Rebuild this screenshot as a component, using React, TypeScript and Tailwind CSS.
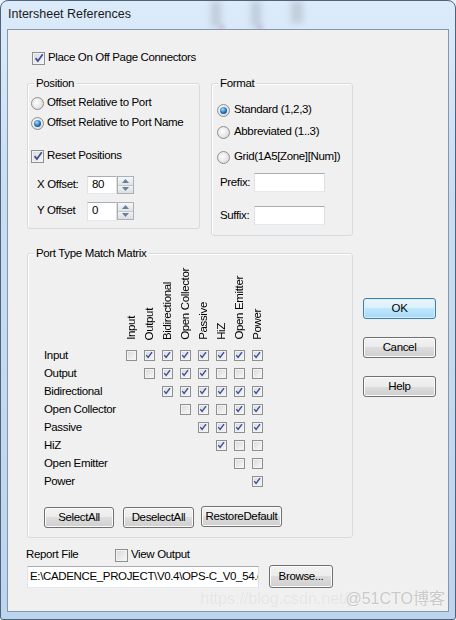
import React from 'react';

const FONT = "[font-family:'Liberation_Sans',Arial,sans-serif]";

const columns = ['Input', 'Output', 'Bidirectional', 'Open Collector', 'Passive', 'HiZ', 'Open Emitter', 'Power'];

// 1 = checked, 0 = unchecked, null = no box (lower triangle)
const matrix: (number | null)[][] = [
  [0, 1, 1, 1, 1, 1, 1, 1],
  [null, 0, 1, 1, 1, 0, 0, 0],
  [null, null, 1, 1, 1, 1, 1, 1],
  [null, null, null, 0, 1, 0, 1, 1],
  [null, null, null, null, 1, 1, 1, 1],
  [null, null, null, null, null, 1, 0, 0],
  [null, null, null, null, null, null, 0, 0],
  [null, null, null, null, null, null, null, 1],
];

function CheckBox({ checked, small = false }: { checked: boolean; small?: boolean }) {
  return (
    <span
      className={`${small ? 'w-[11px] h-[11px]' : 'w-[13px] h-[13px]'} shrink-0 inline-flex items-center justify-center border border-[#8e8f8f] bg-[linear-gradient(135deg,#d9d9d9,#f8f8f8)] shadow-[inset_0_0_0_1px_#f3f3f3]`}
    >
      {checked && (
        <svg viewBox="0 0 9 9" className={small ? 'w-[8px] h-[8px]' : 'w-[10px] h-[10px]'}>
          <path d="M1.4 4.6 L3.5 7.2 L7.9 1.2" fill="none" stroke="#3d4f9c" strokeWidth="1.6" />
        </svg>
      )}
    </span>
  );
}

function Radio({ on }: { on: boolean }) {
  return (
    <span className="w-[13px] h-[13px] shrink-0 inline-flex items-center justify-center rounded-full border border-[#8e8f8f] bg-[radial-gradient(circle_at_40%_40%,#ffffff,#d2d2d2)]">
      {on && (
        <span className="w-[7px] h-[7px] rounded-full bg-[radial-gradient(circle_at_40%_35%,#a8e0ff,#1f6fb8_55%,#0b3a70)]" />
      )}
    </span>
  );
}

function Spin() {
  return (
    <div className="w-[17px] h-[18px] flex flex-col border border-[#a9b0b8] bg-[#ececec]">
      <div className="flex-1 flex items-center justify-center border-b border-[#c2c7cd] bg-[linear-gradient(#f7f7f7,#e3e3e3)]">
        <svg width="7" height="4" viewBox="0 0 7 4">
          <path d="M0 4 L3.5 0 L7 4Z" fill="#6a7fa0" />
        </svg>
      </div>
      <div className="flex-1 flex items-center justify-center bg-[linear-gradient(#f2f2f2,#dedede)]">
        <svg width="7" height="4" viewBox="0 0 7 4">
          <path d="M0 0 L7 0 L3.5 4Z" fill="#6a7fa0" />
        </svg>
      </div>
    </div>
  );
}

function TextBox({ value = '', className = '' }: { value?: string; className?: string }) {
  return (
    <div
      className={`bg-white border border-[#abadb3] border-l-[#e2e3ea] border-r-[#dbdfe6] border-b-[#e3e9ef] flex items-center overflow-hidden whitespace-nowrap ${className}`}
    >
      {value}
    </div>
  );
}

function Button({ label, isDefault = false, className = '' }: { label: string; isDefault?: boolean; className?: string }) {
  const look = isDefault
    ? 'border-[#3c7fb1] bg-[linear-gradient(#eaf6fd_0%,#d9f0fc_50%,#bee6fd_50%,#a7d9f5_100%)] shadow-[inset_0_0_0_1px_#d8f0fd]'
    : 'border-[#707070] bg-[linear-gradient(#f2f2f2_0%,#ebebeb_50%,#dddddd_50%,#cfcfcf_100%)] shadow-[inset_0_0_0_1px_#fbfbfb]';
  return (
    <div className={`h-[21px] rounded-[3px] border flex items-center justify-center whitespace-nowrap ${look} ${className}`}>
      {label}
    </div>
  );
}

function Group({ title, className = '', children }: { title: string; className?: string; children: React.ReactNode }) {
  return (
    <div className={`relative border border-[#d5dbe0] rounded-[3px] shadow-[inset_1px_1px_0_#ffffff] ${className}`}>
      <span className="absolute -top-[9px] left-[6px] px-[2px] bg-[#f0f0f0] leading-[16px] whitespace-nowrap">{title}</span>
      {children}
    </div>
  );
}

export default function App() {
  return (
    <div className={`w-[456px] h-[620px] bg-[#eaf2fa] text-[11.5px] tracking-[-0.35px] text-black whitespace-nowrap ${FONT}`}>
      {/* 창 프레임 */}
      <div className="relative w-full h-full rounded-t-[8px] rounded-b-[3px] border border-[#4f6279] bg-[linear-gradient(#dcebfa,#c9def3_30%,#bcd4ee)] px-[6px] pb-[7px] flex flex-col overflow-hidden">
        {/* 타이틀바 뒤 흐린 배경 */}
        <div className="absolute left-[210px] top-0 w-[10px] h-[26px] bg-[#9aa3ad] opacity-40 blur-[3px]" />
        <div className="absolute left-[250px] top-0 w-[10px] h-[26px] bg-[#9aa3ad] opacity-40 blur-[3px]" />
        <div className="absolute left-[290px] top-0 w-[12px] h-[22px] bg-[#9aa3ad] opacity-40 blur-[3px]" />
        <div className="absolute left-[218px] top-[24px] w-[6px] h-[5px] rounded-full bg-[#c070b0] opacity-40 blur-[2px]" />
        <div className="absolute left-[256px] top-[24px] w-[6px] h-[5px] rounded-full bg-[#c070b0] opacity-40 blur-[2px]" />

        <div className="relative h-[28px] flex items-center pl-[1px] pb-[1px] text-[12.5px] tracking-normal text-[#1b1b1b]">
          Intersheet References
        </div>

        {/* 클라이언트 영역 */}
        <div className="relative flex-1 border border-[#8396ab] bg-[#f0f0f0] pt-[20px] pl-[19px]">
          <div className="h-[16px] flex items-center gap-[3px] ml-[5px]">
            <CheckBox checked />
            <span>Place On Off Page Connectors</span>
          </div>

          <div className="flex mt-[17px]">
            <div className="w-[326px] flex flex-col">
              <div className="flex items-start gap-[11px]">
                <Group title="Position" className="w-[173px] h-[146px] pt-[9px]">
                  <div className="h-[20px] flex items-center gap-[3px] pl-[3px]">
                    <Radio on={false} />
                    <span>Offset Relative to Port</span>
                  </div>
                  <div className="h-[20px] flex items-center gap-[3px] pl-[3px]">
                    <Radio on />
                    <span>Offset Relative to Port Name</span>
                  </div>
                  <div className="h-[20px] mt-[13px] flex items-center gap-[3px] pl-[3px]">
                    <CheckBox checked />
                    <span>Reset Positions</span>
                  </div>
                  <div className="h-[20px] mt-[9px] flex items-center pl-[9px]">
                    <span className="w-[50px]">X Offset:</span>
                    <TextBox value="80" className="w-[30px] h-[18px] pl-[4px]" />
                    <Spin />
                  </div>
                  <div className="h-[20px] mt-[6px] flex items-center pl-[9px]">
                    <span className="w-[50px]">Y Offset</span>
                    <TextBox value="0" className="w-[30px] h-[19px] pl-[4px]" />
                    <Spin />
                  </div>
                </Group>

                <Group title="Format" className="w-[142px] h-[153px] pt-[16px]">
                  <div className="h-[20px] flex items-center gap-[4px] pl-[5px]">
                    <Radio on />
                    <span>Standard (1,2,3)</span>
                  </div>
                  <div className="h-[20px] mt-[2px] flex items-center gap-[4px] pl-[5px]">
                    <Radio on={false} />
                    <span>Abbreviated (1..3)</span>
                  </div>
                  <div className="h-[20px] mt-[5px] flex items-center gap-[4px] pl-[5px]">
                    <Radio on={false} />
                    <span>Grid(1A5[Zone][Num])</span>
                  </div>
                  <div className="h-[19px] mt-[6px] flex items-center pl-[8px]">
                    <span className="w-[34px]">Prefix:</span>
                    <TextBox className="w-[71px] h-[19px]" />
                  </div>
                  <div className="h-[19px] mt-[14px] flex items-center pl-[8px]">
                    <span className="w-[34px]">Suffix:</span>
                    <TextBox className="w-[71px] h-[19px]" />
                  </div>
                </Group>
              </div>

              <Group title="Port Type Match Matrix" className="mt-[17px] h-[285px] pl-[16px]">
                <div className="h-[86px] flex items-end">
                  <div className="w-[78px]" />
                  {columns.map((c) => (
                    <div key={c} className="w-[18px] flex justify-center">
                      <span className="[writing-mode:vertical-rl] rotate-180 leading-[18px]">{c}</span>
                    </div>
                  ))}
                </div>
                <div className="mt-[6px] flex flex-col">
                  {columns.map((row, r) => (
                    <div key={row} className="h-[18px] flex items-center">
                      <span className="w-[78px] leading-[18px]">{row}</span>
                      {matrix[r].map((v, c) => (
                        <div key={c} className="w-[18px] flex justify-center">
                          {v !== null && <CheckBox checked={v === 1} small />}
                        </div>
                      ))}
                    </div>
                  ))}
                </div>
                <div className="mt-[16px] flex items-start">
                  <Button label="SelectAll" className="w-[70px] mt-[1px]" />
                  <Button label="DeselectAll" className="w-[71px] ml-[9px] mt-[1px]" />
                  <Button label="RestoreDefault" className="w-[81px] ml-[7px]" />
                </div>
              </Group>

              <div className="mt-[9px] h-[16px] flex items-center -ml-[1px]">
                <span className="w-[89px]">Report File</span>
                <CheckBox checked={false} />
                <span className="ml-[3px]">View Output</span>
              </div>
              <div className="mt-[2px] flex items-center">
                <TextBox value="E:\CADENCE_PROJECT\V0.4\OPS-C_V0_54.opj" className="w-[232px] h-[22px] pl-[2px]" />
                <Button label="Browse..." className="w-[64px] h-[23px] ml-[10px]" />
              </div>
            </div>

            <div className="ml-[10px] mt-[215px] flex flex-col gap-[18px]">
              <Button label="OK" isDefault className="w-[73px]" />
              <Button label="Cancel" className="w-[73px]" />
              <Button label="Help" className="w-[73px]" />
            </div>
          </div>

          {/* 워터마크 */}
          <div className="absolute right-[3px] bottom-[2px] flex items-center text-[16px] leading-[20px] tracking-normal [font-family:'Liberation_Sans',Arial,'Noto_Sans_CJK_SC',sans-serif]">
            <span className="text-[#e4e4e4] [text-shadow:0_0_1px_#ffffff]">https://blog.csdn.net/j</span>
            <span className="-ml-[6px] text-[#c9c9c9] [text-shadow:0_0_2px_#ffffff]">@51CTO博客</span>
          </div>
        </div>
      </div>
    </div>
  );
}
